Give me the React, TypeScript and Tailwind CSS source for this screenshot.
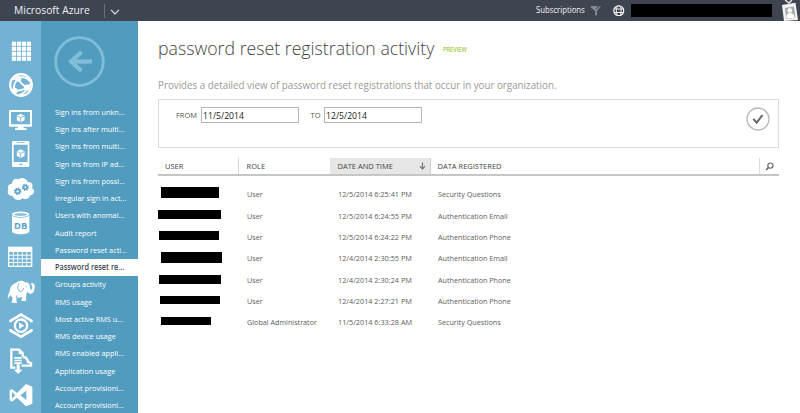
import type { ReactNode } from "react";

const RAIL = "#72b3d3";

function Glyph({ children }: { children: ReactNode }) {
  return (
    <div className="flex h-[34.4px] items-center justify-center">
      <svg viewBox="0 0 90 90" className="size-[30px] shrink-0 overflow-visible" fill="white">
        {children}
      </svg>
    </div>
  );
}

function Cube({ x, y, r }: { x: number; y: number; r: number }) {
  return (
    <g transform={`translate(${x} ${y}) scale(${r / 12})`}>
      <path d="M0-13 11.5-7v14L0 13-11.5 7V-7Z" />
      <path d="M-10-6 0-1 10-6M0-1V12" fill="none" stroke={RAIL} strokeWidth="2.6" />
    </g>
  );
}

function Gear({ x, y, r }: { x: number; y: number; r: number }) {
  return (
    <g transform={`translate(${x} ${y})`} fill="none" stroke="#5ba3c6">
      <circle r={r} strokeWidth="5" />
      <circle r={r + 3.5} strokeWidth="4" strokeDasharray={`${((r + 3.5) * Math.PI) / 8}`} />
    </g>
  );
}

function Rail() {
  return (
    <nav className="w-[41px] shrink-0 bg-[#72b3d3] pt-[12.8px] pr-px pl-0.5">
      <Glyph>
        {[0, 1, 2, 3].map((r) =>
          [0, 1, 2, 3].map((c) => (
            <rect key={`${r}${c}`} x={17.5 + c * 15} y={17 + r * 15} width="12.500" height="12.500" />
          )),
        )}
      </Glyph>
      <Glyph>
        <circle cx="45" cy="45" r="32.5" fill="none" stroke="white" strokeWidth="6.5" />
        <path
          d="M37 25Q55 15 72 34M37 25Q21 39 24 63M37 25Q44 43 64 53M64 53Q74 44 74 38M64 53Q58 70 40 75M64 53Q41 64 24 63M37 25Q25 24 20 30"
          fill="none"
          stroke="white"
          strokeWidth="5.5"
        />
        <circle cx="37" cy="26" r="9" />
        <circle cx="64" cy="53" r="9.5" />
        <circle cx="26" cy="62" r="8.5" />
      </Glyph>
      <Glyph>
        <path fillRule="evenodd" d="M12 15h63q3 0 3 3v44q0 3-3 3H12q-3 0-3-3V18q0-3 3-3Zm3 6v37h57V21Z" />
        <path d="M35 64h18v6h9v5H27v-5h8Z" />
        <Cube x={44} y={39} r={12} />
      </Glyph>
      <Glyph>
        <path
          fillRule="evenodd"
          d="M22 6h44q4 0 4 4v70q0 4-4 4H22q-4 0-4-4V10q0-4 4-4Zm1 11v52h42V17ZM33 10v2h22v-2Zm7 64v4h9v-4Z"
        />
        <Cube x={44} y={44} r={12} />
      </Glyph>
      <Glyph>
        <path d="M20 66C7 67 2 55 7 46 3 38 9 28 18 29 18 17 29 11 38 16 47 7 63 13 65 24 77 22 83 34 78 42 88 48 85 63 73 64 70 75 57 79 49 72 43 82 24 80 20 66Z" />
        <Gear x={35} y={52} r={6} />
        <Gear x={58} y={40} r={5.5} />
      </Glyph>
      <Glyph>
        <path d="M18 20v50c0 12 52 12 52 0V20c0 12-52 12-52 0Z" />
        <ellipse cx="44" cy="19" rx="26" ry="8.5" />
        <ellipse cx="44" cy="19.500" rx="20" ry="4.500" fill={RAIL} opacity=".8" />
        <text
          x="44"
          y="63"
          textAnchor="middle"
          fill="#5ba3c6"
          className="font-['Open_Sans',sans-serif] text-[28px] font-bold"
        >
          DB
        </text>
      </Glyph>
      <Glyph>
        <path d="M6 14h73v61H6Z" />
        {[0, 1, 2, 3].map((r) =>
          [0, 1, 2, 3, 4].map((c) => (
            <rect key={`${r}${c}`} x={10 + c * 13.4} y={30 + r * 11} width="10.8" height="8" fill={RAIL} />
          )),
        )}
      </Glyph>
      <Glyph>
        <path d="M30 18C38 10 51 9 57 16 66 15 72 21 72 30 72 39 77 41 79 34L77 24 74 20 80 17 86 23C87 36 84 50 74 50 69 50 67 47 65 44L61 50 60 72H46L46 60Q40 64 33 61L31 69 33 78 17 77 20 62Q15 59 14 53L10 60 5 67 6 56 11 42C13 29 20 20 30 18Z" />
        <path
          d="M38 19Q31 34 40 43 50 46 53 33M59 28l3 2M46 68V60M31 63l2-8"
          fill="none"
          stroke={RAIL}
          strokeWidth="2.600"
        />
      </Glyph>
      <Glyph>
        <path
          d="M14 34V29L45 11 76 29V34M14 54V59L45 77 76 59V54"
          fill="none"
          stroke="white"
          strokeWidth="8"
        />
        <path fillRule="evenodd" d="M45 22a22 22 0 1 0 .1 0Zm0 7a15 15 0 1 1-.1 0Z" />
        <path d="M39 34 55 44 39 54Z" />
      </Glyph>
      <Glyph>
        <path d="M28 65H16V11H39L50 22V32" fill="none" stroke="white" strokeWidth="7" />
        <path d="M38 8V24H54Z" />
        <path d="M47 59H75V51L66 48Q64 34 51 33" fill="none" stroke="white" strokeWidth="7" />
        <path d="M25 33h22v5H25Zm0 8h22v5H25Zm0 8h22v5H25ZM32 55h9v16h8L36.500 84 24 71h8Z" />
      </Glyph>
      <Glyph>
        <path
          fillRule="evenodd"
          d="M60 12 79 20V71L60 79 33 53 18 65 11 61V31L18 27 33 39ZM61 32 43 46 61 60ZM18 36V56L28 46Z"
        />
      </Glyph>
    </nav>
  );
}

const menu = [
  "Sign ins from unkn...",
  "Sign ins after multi...",
  "Sign ins from multi...",
  "Sign ins from IP ad...",
  "Sign ins from possi...",
  "Irregular sign in act...",
  "Users with anomal...",
  "Audit report",
  "Password reset acti...",
  "Password reset re...",
  "Groups activity",
  "RMS usage",
  "Most active RMS u...",
  "RMS device usage",
  "RMS enabled appli...",
  "Application usage",
  "Account provisioni...",
  "Account provisioni...",
];

function Menu() {
  return (
    <aside className="w-[97px] shrink-0 bg-[#519cbe]">
      <div className="flex h-[82.4px] pt-[15px] pl-[13px]">
        <svg viewBox="0 0 51 51" className="size-[51px]" fill="none" stroke="#7fbdd9">
          <circle cx="25.500" cy="25.500" r="23.800" strokeWidth="2.8" />
          <path d="M38 25.500H16" strokeWidth="4.400" />
          <path d="M27.500 16 17 25.500 27.500 35" strokeWidth="4.200" />
        </svg>
      </div>
      {menu.map((label, i) => (
        <div
          key={i}
          className={`flex h-[17.24px] items-center pl-3.5 text-[8px] whitespace-nowrap ${
            i === 9 ? "bg-white font-semibold text-[#3c4650]" : "font-medium text-white"
          }`}
        >
          <span className="origin-left scale-x-[0.915]">{label}</span>
        </div>
      ))}
    </aside>
  );
}

function TopBar() {
  return (
    <header className="flex h-[21px] shrink-0 items-center bg-[#3e4551] text-white">
      <div className="w-[91px] pl-[13.500px] text-[10.800px] whitespace-nowrap text-[#eef0f2]">
        <div className="origin-left scale-x-[0.955]">Microsoft Azure</div>
      </div>
      <div className="ml-[13px] h-[14px] w-px bg-[#69707a]" />
      <svg viewBox="0 0 10 6" className="mt-[2px] ml-[5px] h-[6px] w-[10px]" fill="none" stroke="#e5e8ea" strokeWidth="1.100">
        <path d="M1 .8 5 4.900 9 .8" />
      </svg>
      <div className="ml-[415.5px] w-[50px] text-[8.500px] whitespace-nowrap text-[#f2f3f5]">
        <div className="origin-left scale-x-[0.91] font-medium">Subscriptions</div>
      </div>
      <svg viewBox="0 0 10 10" className="ml-[5.500px] size-[10px]" fill="#878c94">
        <path d="M0 0H4L5.500 3.500 8.700 0H10L6 5.200V9.500H4.200V5L0 1.500Z" />
        <path d="M2 0H7L5 3Z" />
      </svg>
      <svg
        viewBox="0 0 12 12"
        className="ml-[12px] size-[11.5px]"
        fill="none"
        stroke="#f3f4f5"
        strokeWidth="1"
      >
        <circle cx="6" cy="6" r="5.200" strokeWidth="1.200" />
        <ellipse cx="6" cy="6" rx="2.500" ry="5.200" />
        <path d="M1 4.200H11M1 7.800H11" />
      </svg>
      <div className="ml-[6.500px] h-[13.500px] w-[141px] bg-black" />
      <svg viewBox="0 0 18 21" className="ml-[8.500px] h-[21px] w-[18px]">
        <path d="M4 0 8 3 11 0" fill="none" stroke="#e5e7e9" strokeWidth="1.400" />
        <path d="M1 5 14.500 2.800 17 20 3 21Z" fill="#f4f4f4" />
        <path d="M3.800 8 13 6.500 14.500 18 5.300 19Z" fill="#a8abad" />
        <circle cx="8.800" cy="10.500" r="2.300" fill="white" />
        <path d="M5.500 18.500Q5 13 9 13T14 17.800Z" fill="white" />
      </svg>
    </header>
  );
}

function DateField({ value }: { value: string }) {
  return (
    <div className="h-4 w-[98px] border border-[#b5b5b5] pl-px text-[9.200px] leading-[15px] text-[#222]">
      <div className="origin-left scale-x-[0.94]">{value}</div>
    </div>
  );
}

function Filter() {
  return (
    <div className="flex h-[49px] w-[621px] border border-[#dcdcdc] pt-[7px] text-[#555]">
      <div className="ml-[17px] w-[24.500px] pt-px text-[7.500px] leading-[15px]">FROM</div>
      <DateField value="11/5/2014" />
      <div className="ml-3 w-[13.500px] pt-px text-[7.500px] leading-[15px]">TO</div>
      <DateField value="12/5/2014" />
      <svg viewBox="0 0 24 24" className="mr-2 ml-auto size-6" fill="none">
        <circle cx="12" cy="12" r="11" stroke="#b9b9b9" strokeWidth="1.300" />
        <path d="M7.300 11.800 10.700 15.700 16.500 8" stroke="#666" strokeWidth="2" />
      </svg>
    </div>
  );
}

const rows = [
  ["ml-[2.500px] mt-[4px] w-[58.500px] h-[11px]", "User", "12/5/2014 6:25:41 PM", "Security Questions"],
  ["ml-0 mt-[5.300px] w-[62.500px] h-[9px]", "User", "12/5/2014 6:24:55 PM", "Authentication Email"],
  ["ml-[0.500px] mt-[5px] w-[60.500px] h-[9px]", "User", "12/5/2014 6:24:22 PM", "Authentication Phone"],
  ["ml-[2.500px] mt-[4.700px] w-[61px] h-[11px]", "User", "12/4/2014 2:30:55 PM", "Authentication Email"],
  ["ml-[0.500px] mt-[6.300px] w-[62.500px] h-[9px]", "User", "12/4/2014 2:30:24 PM", "Authentication Phone"],
  ["ml-[1.500px] mt-[6px] w-[60px] h-[8px]", "User", "12/4/2014 2:27:21 PM", "Authentication Phone"],
  ["ml-[3px] mt-[5.700px] w-[50px] h-[8px]", "Global Administrator", "11/5/2014 6:33:28 AM", "Security Questions"],
];

function Table() {
  return (
    <section className="mt-[10px] w-[621px]">
      <div className="flex h-[18px] border-b-2 border-[#c6c6c6] text-[7.500px] leading-[17px] whitespace-nowrap text-[#444]">
        <div className="w-[81px] border-r border-[#d9d9d9] pl-[7px]">USER</div>
        <div className="w-[91px] pl-[7.500px]">ROLE</div>
        <div className="flex w-[101px] items-center border-r border-[#cfcfcf] bg-[#e6e6e6] pr-1 pl-[7.500px]">
          DATE AND TIME
          <svg viewBox="0 0 7 8" className="ml-auto h-2 w-[7px]" fill="none" stroke="#777" strokeWidth="1.200">
            <path d="M3.500.5V7M1 4.200 3.500 7 6 4.200" />
          </svg>
        </div>
        <div className="grow pl-[6.500px]">DATA REGISTERED</div>
        <div className="flex w-5 items-center justify-center border-l border-[#dcdcdc]">
          <svg viewBox="0 0 10 10" className="mt-px size-[9px]" fill="none" stroke="#666" strokeWidth="1.300">
            <circle cx="6" cy="4" r="2.900" />
            <path d="M4 6 1.200 8.800" strokeWidth="1.700" />
          </svg>
        </div>
      </div>
      <div className="pt-[7.300px] text-[8px] whitespace-nowrap text-[#5c5c5c]">
        {rows.map(([bar, role, date, data], i) => (
          <div key={i} className="flex h-[21.330px] items-center">
            <div className="w-[88.500px] shrink-0 self-start">
              <div className={`bg-black ${bar}`} />
            </div>
            <div className="w-[91px] shrink-0 origin-left scale-x-[0.9] pt-px">{role}</div>
            <div className="w-[100px] shrink-0 origin-left scale-x-[0.91] pt-px">{date}</div>
            <div className="origin-left scale-x-[0.9] pt-px">{data}</div>
          </div>
        ))}
      </div>
    </section>
  );
}

export default function App() {
  return (
    <div className="flex h-[413px] w-[800px] flex-col overflow-hidden bg-white font-['Open_Sans','Noto_Sans',sans-serif]">
      <TopBar />
      <div className="flex min-h-0 grow">
        <Rail />
        <Menu />
        <main className="flex grow flex-col pl-5">
          <div className="flex h-14 whitespace-nowrap">
            <h1 className="w-[284.500px] origin-left scale-x-[0.932] pt-[14px] text-[19px] leading-[26px] font-light text-[#444]">
              password reset registration activity
            </h1>
            <span className="origin-left scale-x-[0.89] pt-[21px] text-[6.500px] leading-[15px] font-medium text-[#7fba00]">
              PREVIEW
            </span>
          </div>
          <p className="h-[22px] origin-left scale-x-[0.931] text-[10.500px] leading-[16px] whitespace-nowrap text-[#999]">
            Provides a detailed view of password reset registrations that occur in your organization.
          </p>
          <Filter />
          <Table />
        </main>
      </div>
    </div>
  );
}
